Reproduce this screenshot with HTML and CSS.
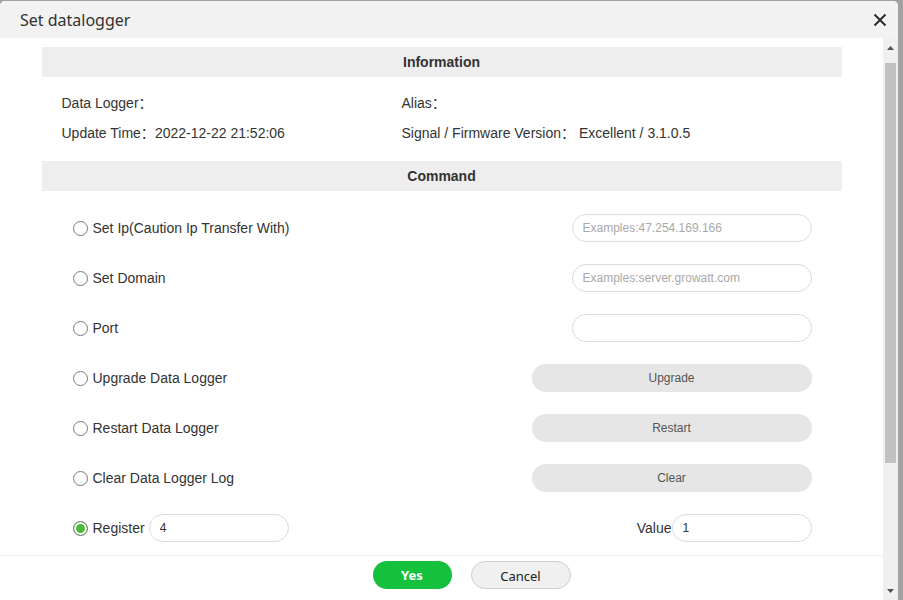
FILE: index.html
```html
<!DOCTYPE html>
<html lang="en">
<head>
<meta charset="utf-8">
<title>Set datalogger</title>
<link rel="stylesheet" href="styles.css">
</head>
<body>
<div class="dialog">
  <div class="dlg-head">
    <span class="dlg-title">Set datalogger</span>
    <button class="close" type="button" aria-label="Close">
      <svg width="14" height="14" viewBox="0 0 14 14"><path d="M1.5 1.5 L12.5 12.5 M12.5 1.5 L1.5 12.5" stroke="#2b2b2b" stroke-width="2" fill="none"/></svg>
    </button>
  </div>
  <div class="dlg-body">
    <div class="view">
      <div class="content">
        <div class="sec-title">Information</div>
        <div class="info">
          <div class="info-item">Data Logger：</div>
          <div class="info-item">Alias：</div>
          <div class="info-item">Update Time：<span>2022-12-22 21:52:06</span></div>
          <div class="info-item">Signal / Firmware Version： <span>Excellent / 3.1.0.5</span></div>
        </div>
        <div class="sec-title">Command</div>
        <div class="cmds">
          <div class="cmd-row">
            <label class="opt"><input type="radio" name="cmd"><span>Set Ip(Caution Ip Transfer With)</span></label>
            <input class="field" type="text" placeholder="Examples:47.254.169.166">
          </div>
          <div class="cmd-row">
            <label class="opt"><input type="radio" name="cmd"><span>Set Domain</span></label>
            <input class="field" type="text" placeholder="Examples:server.growatt.com">
          </div>
          <div class="cmd-row">
            <label class="opt"><input type="radio" name="cmd"><span>Port</span></label>
            <input class="field" type="text">
          </div>
          <div class="cmd-row">
            <label class="opt"><input type="radio" name="cmd"><span>Upgrade Data Logger</span></label>
            <button class="act" type="button">Upgrade</button>
          </div>
          <div class="cmd-row">
            <label class="opt"><input type="radio" name="cmd"><span>Restart Data Logger</span></label>
            <button class="act" type="button">Restart</button>
          </div>
          <div class="cmd-row">
            <label class="opt"><input type="radio" name="cmd"><span>Clear Data Logger Log</span></label>
            <button class="act" type="button">Clear</button>
          </div>
          <div class="cmd-row">
            <div class="grp">
              <label class="opt"><input type="radio" name="cmd" checked><span>Register</span></label>
              <input class="field small reg" type="text" value="4">
            </div>
            <div class="grp">
              <span class="vlabel">Value</span>
              <input class="field small" type="text" value="1">
            </div>
          </div>
        </div>
      </div>
      <div class="dlg-foot">
        <button class="btn yes" type="button">Yes</button>
        <button class="btn cancel" type="button">Cancel</button>
      </div>
    </div>
    <div class="vscroll" aria-hidden="true">
      <div class="sb-btn up"><svg width="7" height="4" viewBox="0 0 7 4"><path d="M0 4 L3.5 0 L7 4 Z" fill="#505050"/></svg></div>
      <div class="sb-track"><div class="sb-thumb"></div></div>
      <div class="sb-btn down"><svg width="7" height="4" viewBox="0 0 7 4"><path d="M0 0 L3.5 4 L7 0 Z" fill="#505050"/></svg></div>
    </div>
  </div>
</div>
</body>
</html>
```
FILE: styles.css
```css
html, body {
  margin: 0;
  padding: 0;
  height: 100%;
  overflow: hidden;
}
body {
  background: #a2a2a2;
  font-family: "Liberation Sans", Arial, "Noto Sans CJK SC", sans-serif;
  color: #333;
}
.dialog {
  width: 898px;
  margin-top: 1px;
  background: #fff;
  border-radius: 5px 5px 0 0;
  overflow: hidden;
}
.dlg-head {
  height: 37px;
  background: #f2f2f2;
  display: flex;
  align-items: center;
  justify-content: space-between;
  padding: 0 11px 0 20px;
}
.dlg-title {
  font-family: "Noto Sans", "Noto Sans CJK SC", sans-serif;
  font-size: 16px;
  color: #333;
}
.close {
  border: 0;
  background: transparent;
  padding: 0;
  width: 14px;
  height: 14px;
  display: flex;
}
.dlg-body {
  height: 562px;
  display: flex;
  background: #fff;
}
.view {
  flex: 1;
  min-width: 0;
  display: flex;
  flex-direction: column;
}
.vscroll {
  width: 15px;
  background: #f0f0f0;
  display: flex;
  flex-direction: column;
}
.sb-btn {
  height: 22px;
  display: flex;
  justify-content: center;
}
.sb-btn.up {
  align-items: flex-start;
  padding-top: 8px;
  box-sizing: border-box;
}
.sb-btn.down {
  align-items: flex-end;
  padding-bottom: 7px;
  box-sizing: border-box;
}
.sb-track {
  flex: 1;
  padding: 3px 2px 0;
}
.sb-thumb {
  height: 400px;
  background: #c1c1c1;
}
.content {
  flex: 1;
  overflow: hidden;
  padding-top: 9px;
}
.sec-title {
  width: 800px;
  height: 30px;
  margin: 0 auto;
  background: #eeeeee;
  font-weight: bold;
  font-size: 14px;
  line-height: 30px;
  text-align: center;
  color: #333;
}
.info {
  width: 780px;
  margin: 0 auto;
  padding: 11px 0 13px 20px;
  display: grid;
  grid-template-columns: 340px 1fr;
  font-size: 14px;
  line-height: 30px;
}
.cmds {
  width: 800px;
  margin: 0 auto;
  padding-top: 12px;
}
.cmd-row {
  height: 50px;
  display: flex;
  align-items: center;
  justify-content: space-between;
  padding: 0 30px 0 31px;
}
.opt {
  display: flex;
  align-items: center;
  gap: 5px;
  font-size: 14px;
  color: #333;
}
.opt input {
  appearance: none;
  -webkit-appearance: none;
  width: 15px;
  height: 15px;
  margin: 0;
  border: 1px solid #7a7a7a;
  border-radius: 50%;
  background: #fff;
}
.opt input:checked {
  background: #4cbb3a;
  box-shadow: inset 0 0 0 2px #fff;
}
.field {
  box-sizing: border-box;
  width: 240px;
  height: 28px;
  border: 1px solid #dcdcdc;
  border-radius: 14px;
  padding: 0 10px;
  font-family: "Liberation Sans", Arial, sans-serif;
  font-size: 12px;
  color: #333;
  outline: none;
  background: #fff;
}
.field::placeholder {
  color: #a9a9a9;
}
.field.small {
  width: 140px;
}
.field.reg {
  margin-left: 4px;
}
.grp {
  display: flex;
  align-items: center;
}
.vlabel {
  font-size: 14px;
  color: #333;
}
.act {
  width: 280px;
  height: 28px;
  border: 0;
  border-radius: 14px;
  background: #e6e6e6;
  font-family: "Liberation Sans", Arial, sans-serif;
  font-size: 12px;
  color: #555;
  padding: 0;
}
.dlg-foot {
  flex: none;
  height: 45px;
  box-sizing: border-box;
  background: #fff;
  border-top: 1px solid #ececec;
  display: flex;
  justify-content: center;
  align-items: flex-start;
  gap: 19px;
  padding: 5px 0 0 60px;
}
.btn {
  height: 28px;
  border-radius: 14px;
  font-family: "Noto Sans", "Noto Sans CJK SC", sans-serif;
  font-size: 13px;
  padding: 0;
}
.yes {
  width: 79px;
  border: 0;
  background: #13c13d;
  color: #fff;
  font-weight: bold;
}
.cancel {
  width: 100px;
  border: 1px solid #cfcfcf;
  background: #f0f0f0;
  color: #222;
  padding-top: 2px;
}
```
